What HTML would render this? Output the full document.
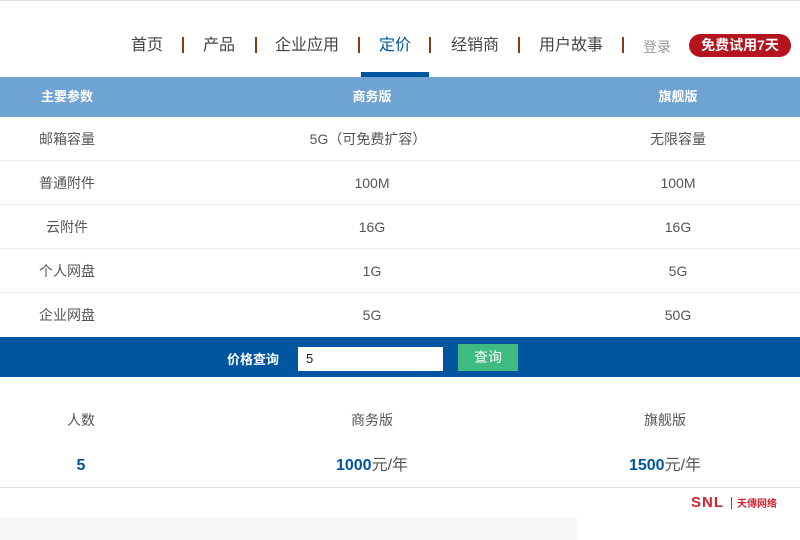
<!DOCTYPE html>
<html><head><meta charset="utf-8"><style>
*{margin:0;padding:0;box-sizing:border-box}
body{width:800px;height:540px;overflow:hidden;background:#fff;font-family:"Liberation Sans","Noto Sans CJK SC",sans-serif;position:relative}
.a{position:absolute}
.nav{top:34px;font-size:16px;color:#444;white-space:nowrap;line-height:24px}
.sep{position:absolute;top:37px;width:2px;height:16px;background:#8b3a0f}
.hd{top:77px;left:0;width:800px;height:40px;background:#6fa3d2;color:#fff;font-size:13px;font-weight:bold}
.c{position:absolute;transform:translateX(-50%);white-space:nowrap}
.row{position:absolute;left:0;width:800px;height:44px;border-bottom:1px solid #eee;font-size:14px;color:#555}
.row span,.hd span{top:50%;margin-top:-10px;line-height:20px}
.v span.c{line-height:20px;top:0}
</style></head><body>
<div class="a" style="top:0;left:0;width:800px;height:1px;background:#ddd"></div>
<div class="a nav" style="left:131px">首页</div>
<div class="sep" style="left:182px"></div>
<div class="a nav" style="left:203px">产品</div>
<div class="sep" style="left:255px"></div>
<div class="a nav" style="left:275px">企业应用</div>
<div class="sep" style="left:358px"></div>
<div class="a nav" style="left:379px;color:#0055a0">定价</div>
<div class="sep" style="left:429px"></div>
<div class="a nav" style="left:451px">经销商</div>
<div class="sep" style="left:518px"></div>
<div class="a nav" style="left:539px">用户故事</div>
<div class="sep" style="left:622px"></div>
<div class="a" style="left:643px;top:37px;font-size:14px;color:#999;line-height:20px">登录</div>
<div class="a" style="left:689px;top:34px;width:102px;height:23px;border-radius:12px;background:#b5141e;color:#fff;font-size:14px;font-weight:bold;text-align:center;line-height:23px">免费试用7天</div>
<div class="a" style="left:361px;top:72px;width:68px;height:5px;background:#0055a0"></div>
<div class="a hd"><span class="c" style="left:67px">主要参数</span><span class="c" style="left:372px">商务版</span><span class="c" style="left:678px">旗舰版</span></div>
<div class="row" style="top:117px"><span class="c" style="left:67px">邮箱容量</span><span class="c" style="left:368px">5G（可免费扩容）</span><span class="c" style="left:678px">无限容量</span></div>
<div class="row" style="top:161px"><span class="c" style="left:67px">普通附件</span><span class="c" style="left:372px">100M</span><span class="c" style="left:678px">100M</span></div>
<div class="row" style="top:205px"><span class="c" style="left:67px">云附件</span><span class="c" style="left:372px">16G</span><span class="c" style="left:678px">16G</span></div>
<div class="row" style="top:249px"><span class="c" style="left:67px">个人网盘</span><span class="c" style="left:372px">1G</span><span class="c" style="left:678px">5G</span></div>
<div class="row" style="top:293px;border:none"><span class="c" style="left:67px">企业网盘</span><span class="c" style="left:372px">5G</span><span class="c" style="left:678px">50G</span></div>
<div class="a" style="top:337px;left:0;width:800px;height:40px;background:#0055a0"></div>
<div class="a" style="left:227px;top:349px;color:#fff;font-size:13px;font-weight:bold">价格查询</div>
<div class="a" style="left:298px;top:347px;width:145px;height:24px;background:#fff;font-size:13px;line-height:24px;padding-left:8px;color:#222">5</div>
<div class="a" style="left:458px;top:344px;width:60px;height:27px;background:#3dbb80;color:#fff;font-size:14px;text-align:center;line-height:27px">查询</div>
<div class="a" style="top:410px;width:800px;font-size:14px;color:#555;line-height:20px"><span class="c" style="left:81px">人数</span><span class="c" style="left:372px">商务版</span><span class="c" style="left:665px">旗舰版</span></div>
<div class="a v" style="top:456px;width:800px;font-size:16px;color:#0055a0;font-weight:bold"><span class="c" style="left:81px">5</span><span class="c" style="left:372px">1000<span style="font-weight:normal;color:#555">元/年</span></span><span class="c" style="left:665px">1500<span style="font-weight:normal;color:#555">元/年</span></span></div>
<div class="a" style="top:487px;left:0;width:800px;height:1px;background:#ddd"></div>
<div class="a" style="left:691px;top:494px;color:#d1252e;font-weight:bold;font-size:15px;letter-spacing:1px">SNL</div>
<div class="a" style="left:731px;top:497px;width:1px;height:12px;background:#555"></div>
<div class="a" style="left:737px;top:495px;color:#d1252e;font-weight:bold;font-size:10px">天傳网络</div>
<div class="a" style="left:0;top:517px;width:577px;height:23px;background:#f7f7f7"></div>
</body></html>
